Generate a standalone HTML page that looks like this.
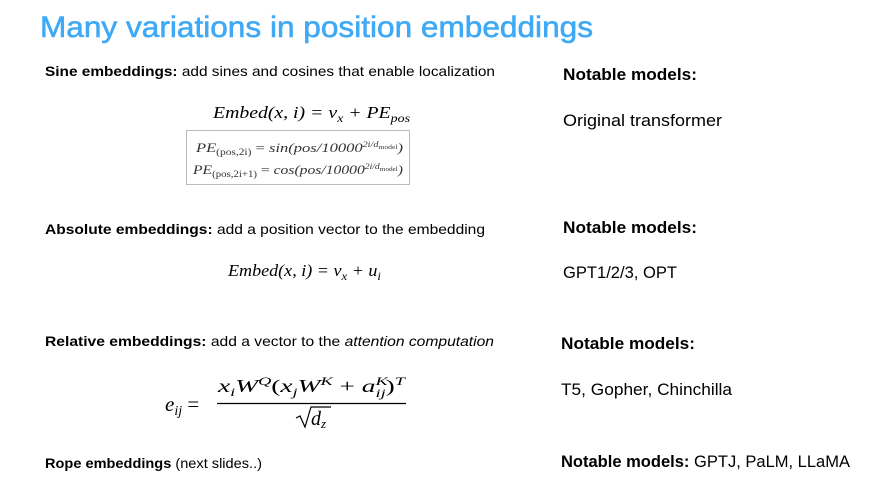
<!DOCTYPE html>
<html><head><meta charset="utf-8"><style>
html,body{margin:0;padding:0;background:#fff;width:871px;height:493px;overflow:hidden}
svg{display:block}
.s{font-family:"Liberation Sans",sans-serif}
.m{font-family:"Liberation Serif",serif}
</style></head><body>
<svg width="871" height="493" viewBox="0 0 871 493">
<text class="s" x="40" y="37" font-size="30" fill="#3fa9f5" stroke="#3fa9f5" stroke-width="0.6" textLength="553" lengthAdjust="spacingAndGlyphs">Many variations in position embeddings</text>

<text class="s" x="45" y="76" font-size="14" fill="#000" textLength="450" lengthAdjust="spacingAndGlyphs"><tspan font-weight="bold">Sine embeddings:</tspan> add sines and cosines that enable localization</text>
<text class="s" x="563" y="80" font-size="17" font-weight="bold" textLength="134" lengthAdjust="spacingAndGlyphs">Notable models:</text>
<text class="m" x="213" y="118" font-size="17" font-style="italic" textLength="197" lengthAdjust="spacingAndGlyphs">Embed(x, i) = v<tspan font-size="12" dy="4">x</tspan><tspan dy="-4"> + PE</tspan><tspan font-size="12" dy="4">pos</tspan></text>
<rect x="186.5" y="130.5" width="223" height="54" fill="#fff" stroke="#bbb"/>
<text class="m" x="196" y="152" font-size="13" fill="#333" font-style="italic" textLength="207" lengthAdjust="spacingAndGlyphs">PE<tspan font-size="9" dy="3" font-style="normal">(pos,2i)</tspan><tspan dy="-3" font-style="normal"> = </tspan>sin(pos/10000<tspan font-size="8" dy="-5">2i/d</tspan><tspan font-size="6" dy="2" font-style="normal">model</tspan><tspan dy="3">)</tspan></text>
<text class="m" x="193" y="174" font-size="13" fill="#333" font-style="italic" textLength="210" lengthAdjust="spacingAndGlyphs">PE<tspan font-size="9" dy="3" font-style="normal">(pos,2i+1)</tspan><tspan dy="-3" font-style="normal"> = </tspan>cos(pos/10000<tspan font-size="8" dy="-5">2i/d</tspan><tspan font-size="6" dy="2" font-style="normal">model</tspan><tspan dy="3">)</tspan></text>
<text class="s" x="563" y="126" font-size="17" textLength="159" lengthAdjust="spacingAndGlyphs">Original transformer</text>

<text class="s" x="45" y="234" font-size="14" textLength="440" lengthAdjust="spacingAndGlyphs"><tspan font-weight="bold">Absolute embeddings:</tspan> add a position vector to the embedding</text>
<text class="s" x="563" y="233" font-size="17" font-weight="bold" textLength="134" lengthAdjust="spacingAndGlyphs">Notable models:</text>
<text class="m" x="228" y="276" font-size="17" font-style="italic" textLength="153" lengthAdjust="spacingAndGlyphs">Embed(x, i) = v<tspan font-size="12" dy="4">x</tspan><tspan dy="-4"> + u</tspan><tspan font-size="12" dy="4">i</tspan></text>
<text class="s" x="563" y="278" font-size="17" textLength="114" lengthAdjust="spacingAndGlyphs">GPT1/2/3, OPT</text>

<text class="s" x="45" y="346" font-size="14" textLength="449" lengthAdjust="spacingAndGlyphs"><tspan font-weight="bold">Relative embeddings:</tspan> add a vector to the <tspan font-style="italic">attention computation</tspan></text>
<text class="s" x="561" y="349" font-size="17" font-weight="bold" textLength="134" lengthAdjust="spacingAndGlyphs">Notable models:</text>
<text class="m" x="165" y="411" font-size="21" font-style="italic">e<tspan font-size="14" dy="4">ij</tspan><tspan dy="-4" font-style="normal"> =</tspan></text>
<text class="m" x="218" y="392" font-size="18" font-style="italic" textLength="187" lengthAdjust="spacingAndGlyphs">x<tspan font-size="12" dy="4">i</tspan><tspan dy="-4">W</tspan><tspan font-size="12" dy="-7">Q</tspan><tspan dy="7" font-style="normal">(</tspan>x<tspan font-size="12" dy="4">j</tspan><tspan dy="-4">W</tspan><tspan font-size="12" dy="-7">K</tspan><tspan dy="7" font-style="normal"> + </tspan>a<tspan font-size="12" dy="-7">K</tspan><tspan font-size="12" dx="-8" dy="12">ij</tspan><tspan dy="-5" font-style="normal">)</tspan><tspan font-size="12" dy="-7">T</tspan></text>
<line x1="217" y1="403.5" x2="406" y2="403.5" stroke="#000" stroke-width="1.2"/>
<path d="M296 418 L300 416 L305 427 L311 407 L331 407" fill="none" stroke="#000" stroke-width="1.2"/>
<text class="m" x="311" y="425" font-size="20" font-style="italic">d<tspan font-size="13" dy="3">z</tspan></text>
<text class="s" x="561" y="395" font-size="17" textLength="171" lengthAdjust="spacingAndGlyphs">T5, Gopher, Chinchilla</text>

<text class="s" x="45" y="468" font-size="14" textLength="217" lengthAdjust="spacingAndGlyphs"><tspan font-weight="bold">Rope embeddings</tspan> (next slides..)</text>
<text class="s" x="561" y="467" font-size="17" textLength="289" lengthAdjust="spacingAndGlyphs"><tspan font-weight="bold">Notable models:</tspan> GPTJ, PaLM, LLaMA</text>
</svg>
</body></html>
